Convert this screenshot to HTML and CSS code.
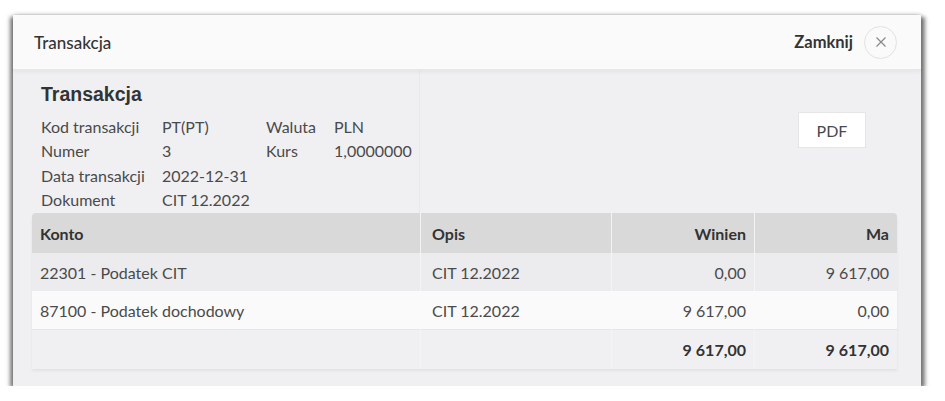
FILE: index.html
```html
<!DOCTYPE html>
<html lang="pl">
<head>
    <meta charset="UTF-8">
    <meta name="viewport" content="width=device-width, initial-scale=1.0">
    <title>Transakcja</title>
    <link rel="stylesheet" href="styles.css">
</head>
<body>
    <div class="modal">
        <div class="modal-header">
            <span class="modal-title">Transakcja</span>
            <div class="close-area">
                <span class="close-label">Zamknij</span>
                <button class="close-btn" aria-label="Zamknij">
                    <svg width="12" height="12" viewBox="0 0 12 12">
                        <path d="M1.5 1.5 L10.5 10.5 M10.5 1.5 L1.5 10.5" stroke="#888" stroke-width="1.2" fill="none"/>
                    </svg>
                </button>
            </div>
        </div>

        <div class="modal-body">
            <div class="summary">
                <div class="info">
                    <h2>Transakcja</h2>
                    <div class="info-grid">
                        <span>Kod transakcji</span><span>PT(PT)</span><span>Waluta</span><span>PLN</span>
                        <span>Numer</span><span>3</span><span>Kurs</span><span>1,0000000</span>
                        <span>Data transakcji</span><span>2022-12-31</span><span></span><span></span>
                        <span>Dokument</span><span>CIT 12.2022</span><span></span><span></span>
                    </div>
                </div>
                <div class="actions">
                    <button class="pdf-btn">PDF</button>
                </div>
            </div>

            <table class="entries">
                <colgroup>
                    <col class="col-konto">
                    <col class="col-opis">
                    <col class="col-amount">
                    <col class="col-amount">
                </colgroup>
                <thead>
                    <tr>
                        <th>Konto</th>
                        <th>Opis</th>
                        <th class="num">Winien</th>
                        <th class="num">Ma</th>
                    </tr>
                </thead>
                <tbody>
                    <tr>
                        <td>22301 - Podatek CIT</td>
                        <td>CIT 12.2022</td>
                        <td class="num">0,00</td>
                        <td class="num">9&#8239;617,00</td>
                    </tr>
                    <tr class="alt">
                        <td>87100 - Podatek dochodowy</td>
                        <td>CIT 12.2022</td>
                        <td class="num">9&#8239;617,00</td>
                        <td class="num">0,00</td>
                    </tr>
                </tbody>
                <tfoot>
                    <tr>
                        <td></td>
                        <td></td>
                        <td class="num">9&#8239;617,00</td>
                        <td class="num">9&#8239;617,00</td>
                    </tr>
                </tfoot>
            </table>
        </div>
    </div>
</body>
</html>
```

FILE: styles.css
```css
body {
    margin: 0;
    background-color: #fff;
    font-family: Lato, "Open Sans", sans-serif;
    color: #4a4a4a;
}
.modal {
    width: 908px;
    margin: 15px 0 0 13px;
    background-color: #f0f0f3;
    box-shadow: -3px 2px 4px rgba(0,0,0,0.5), 4px 2px 4px rgba(0,0,0,0.5), 0 -1px 4px rgba(0,0,0,0.12);
}
.modal-header {
    height: 54px;
    display: flex;
    align-items: center;
    justify-content: space-between;
    padding: 0 24px 0 21px;
    background-color: #fafafa;
    border-bottom: 1px solid #e8e8e8;
    box-shadow: 0 2px 4px rgba(0,0,0,0.05);
    position: relative;
}
.modal-title {
    font-size: 17px;
    font-weight: 500;
    color: #333;
}
.close-area {
    display: flex;
    align-items: center;
    gap: 11px;
}
.close-label {
    font-size: 16.5px;
    font-weight: bold;
    color: #333;
}
.close-btn {
    width: 33px;
    height: 33px;
    border-radius: 50%;
    border: 1px solid #e2e2e2;
    background-color: #fafafa;
    display: flex;
    align-items: center;
    justify-content: center;
    padding: 0;
}
.modal-body {
    padding: 0 24px 17px 19px;
}
.summary {
    display: flex;
    height: 143px;
}
.info {
    width: 388px;
    box-sizing: border-box;
    padding: 12px 0 0 9px;
    border-right: 1px solid #e9e9ec;
}
.info h2 {
    margin: 0 0 8px 0;
    font-family: "Liberation Sans", Arial, sans-serif;
    font-size: 19.5px;
    line-height: 24px;
    font-weight: bold;
    color: #333;
}
.info-grid {
    display: grid;
    grid-template-columns: 121px 104px 68px auto;
    grid-auto-rows: 24.5px;
    align-items: center;
    font-size: 16px;
}
.actions {
    flex: 1;
    display: flex;
    justify-content: flex-end;
    align-items: flex-start;
    padding: 42px 31px 0 0;
}
.pdf-btn {
    width: 68px;
    height: 36px;
    background-color: #fff;
    border: 1px solid #e6e6e6;
    font-family: Lato, sans-serif;
    font-size: 16px;
    color: #4a4a4a;
}
.entries {
    width: 865px;
    border-collapse: separate;
    border-spacing: 0;
    table-layout: fixed;
    font-size: 16px;
    box-shadow: 0 2px 3px rgba(0,0,0,0.06);
    border-radius: 4px 4px 0 0;
}
.col-konto { width: 388px; }
.col-opis { width: 191px; }
.col-amount { width: 143px; }
.entries th,
.entries td {
    padding: 0 8px;
    text-align: left;
    border-left: 1px solid #f4f4f6;
}
.entries th:first-child,
.entries td:first-child {
    border-left: none;
}
.entries th:nth-child(2),
.entries td:nth-child(2) {
    padding-left: 11px;
}
.entries th {
    height: 40px;
    background-color: #d9d9d9;
    color: #333;
    font-weight: bold;
}
.entries th:last-child {
    border-top-right-radius: 4px;
}
.entries thead th:first-child {
    border-top-left-radius: 4px;
}
.entries td {
    height: 38px;
    background-color: #ececee;
}
.entries tr.alt td {
    background-color: #fafafa;
    border-left-color: #fafafa;
}
.entries tfoot td {
    height: 39px;
    background-color: #f0f0f2;
    border-top: 1px solid #e6e6e8;
    font-weight: bold;
    color: #333;
}
.entries .num {
    text-align: right;
}
```
